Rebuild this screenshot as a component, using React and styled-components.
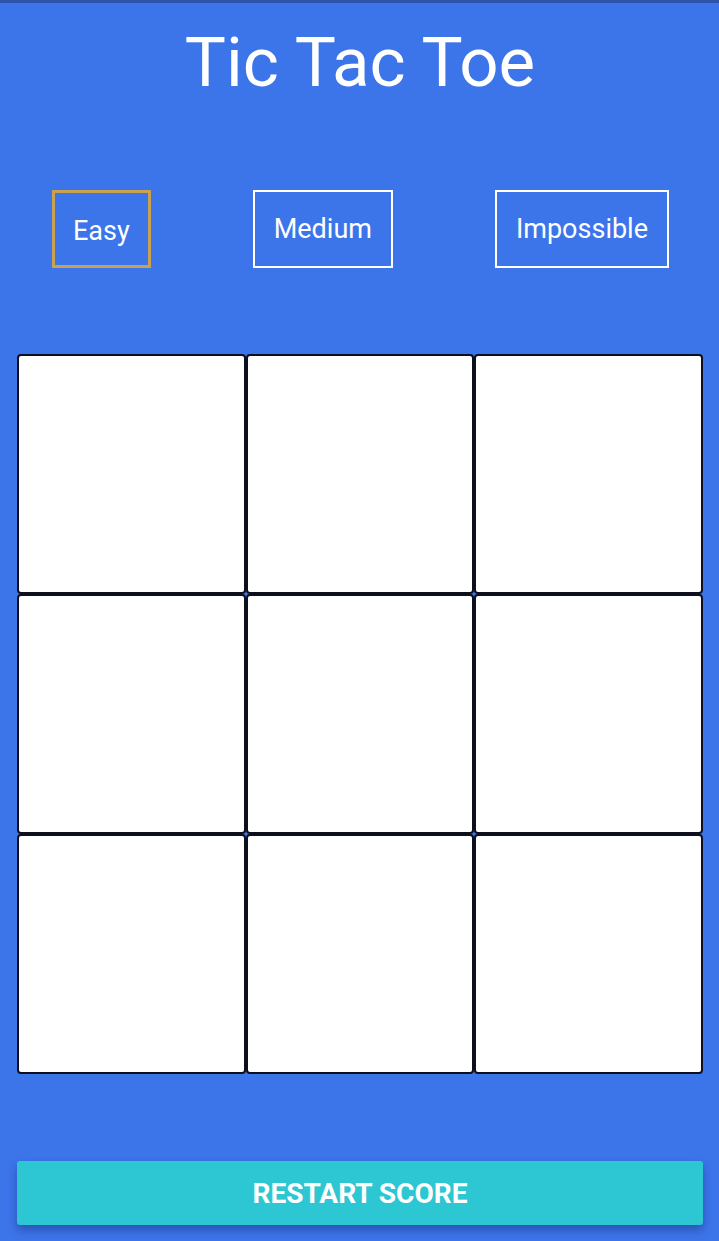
import React, { useState } from 'react';
import styled, { createGlobalStyle } from 'styled-components';

const GlobalStyle = createGlobalStyle`
  body {
    margin: 0;
    background: #3c75ea;
    font-family: Roboto, "Liberation Sans", sans-serif;
  }
`;

const Page = styled.div`
  min-height: 1241px;
  box-sizing: border-box;
  border-top: 3px solid #2d53ab;
  display: flex;
  flex-direction: column;
  padding: 0 16px 0 17px;
`;

const Title = styled.h1`
  margin: 19px 0 0;
  text-align: center;
  color: #fff;
  font-size: 69px;
  font-weight: 400;
  line-height: 82px;
`;

const Levels = styled.div`
  display: flex;
  justify-content: space-between;
  align-items: center;
  margin-top: 86px;
  padding: 0 34px 0 35px;
`;

const Level = styled.button`
  height: 78px;
  box-sizing: border-box;
  padding: ${({ active }) => (active ? '4px 18px 0' : '0 19px')};
  background: transparent;
  border: ${({ active }) => (active ? '3px solid #c9a14f' : '2px solid #fff')};
  color: #fff;
  font-family: Roboto, "Liberation Sans", sans-serif;
  font-size: 27px;
  cursor: pointer;
`;

const Board = styled.div`
  margin-top: 86px;
  display: grid;
  grid-template-columns: repeat(3, 1fr);
  grid-auto-rows: 240px;
`;

const Cell = styled.div`
  background: #fff;
  border: 2px solid #0d0f1c;
  border-radius: 4px;
`;

const Restart = styled.button`
  margin-top: 87px;
  height: 64px;
  border: none;
  border-radius: 3px;
  background: #2cc7d3;
  color: #fff;
  font-family: Roboto, "Liberation Sans", sans-serif;
  font-size: 28px;
  font-weight: 700;
  text-transform: uppercase;
  box-shadow: 0 5px 10px rgba(20, 40, 110, 0.45);
  cursor: pointer;
`;

export default function App() {
  const [level, setLevel] = useState('Easy');
  return (
    <>
      <GlobalStyle />
      <Page>
        <Title>Tic Tac Toe</Title>
        <Levels>
          {['Easy', 'Medium', 'Impossible'].map((l) => (
            <Level key={l} active={level === l} onClick={() => setLevel(l)}>
              {l}
            </Level>
          ))}
        </Levels>
        <Board>
          {Array.from({ length: 9 }).map((_, i) => (
            <Cell key={i} />
          ))}
        </Board>
        <Restart>Restart score</Restart>
      </Page>
    </>
  );
}
